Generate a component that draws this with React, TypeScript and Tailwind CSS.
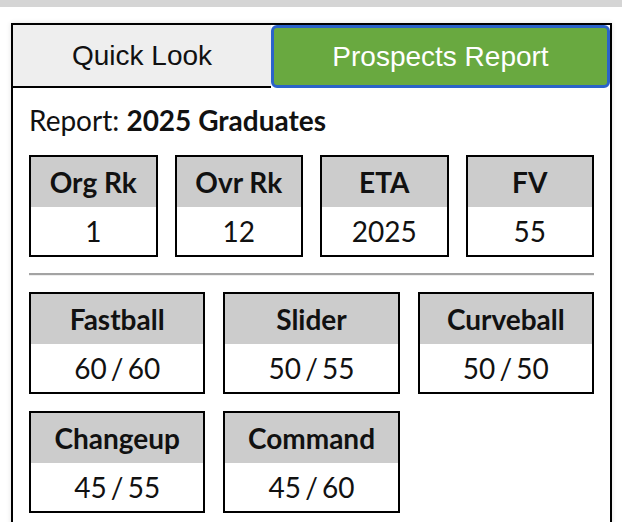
import React from "react";

const topStats = [
  { label: "Org Rk", value: "1" },
  { label: "Ovr Rk", value: "12" },
  { label: "ETA", value: "2025" },
  { label: "FV", value: "55" },
];

const pitches = [
  { label: "Fastball", value: "60 / 60" },
  { label: "Slider", value: "50 / 55" },
  { label: "Curveball", value: "50 / 50" },
  { label: "Changeup", value: "45 / 55" },
  { label: "Command", value: "45 / 60" },
];

function StatBox({ label, value }: { label: string; value: string }) {
  return (
    <div className="border-2 border-black bg-white">
      <div className="h-[50px] bg-[#cccccc] flex items-center justify-center font-bold text-[28px] text-[#111]">
        {label}
      </div>
      <div className="h-[48px] flex items-center justify-center text-[28px] text-[#111] [word-spacing:-3px]">
        {value}
      </div>
    </div>
  );
}

export default function App() {
  return (
    <div className="w-[622px] h-[522px] bg-white overflow-hidden" style={{ fontFamily: "Lato, 'Noto Sans', sans-serif" }}>
      <div className="h-[7px] bg-[#d5d5d5]" />
      <div className="mt-[16px] ml-[11px] w-[601px] h-[540px] border-2 border-black shadow-[0_0_5px_rgba(0,0,0,0.12)]">
        <div className="flex h-[63px]" style={{ fontFamily: "'Liberation Sans', Arial, sans-serif" }}>
          <div className="w-[258px] bg-[#eeeeee] border-b-2 border-black flex items-center justify-center text-[28px] text-[#111]">
            Quick Look
          </div>
          <div className="flex-1 bg-[#69a940] border-[3px] border-[#2b63c9] rounded-[6px] flex items-center justify-center text-[28px] text-white">
            Prospects Report
          </div>
        </div>
        <div className="px-[16px] pt-[16px]">
          <div className="text-[28px] leading-[1.2] text-[#111]">
            Report: <span className="font-bold">2025 Graduates</span>
          </div>
          <div className="mt-[17px] grid grid-cols-4 gap-[17px]">
            {topStats.map((s) => (
              <StatBox key={s.label} {...s} />
            ))}
          </div>
          <div className="my-[16px] border-t-2 border-[#a3a3a3] border-b border-b-[#eeeeee]" />
          <div className="grid grid-cols-3 gap-x-[18px] gap-y-[17px]">
            {pitches.map((p) => (
              <StatBox key={p.label} {...p} />
            ))}
          </div>
        </div>
      </div>
    </div>
  );
}
